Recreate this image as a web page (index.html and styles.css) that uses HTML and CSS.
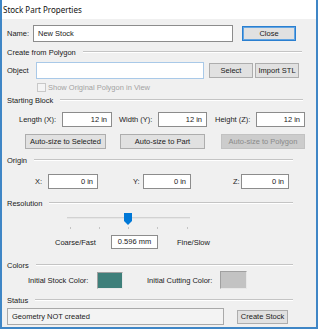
FILE: index.html
```html
<!DOCTYPE html>
<html>
<head>
<meta charset="utf-8">
<link rel="stylesheet" href="styles.css">
</head>
<body>
<div class="window">
  <div class="titlebar">Stock Part Properties</div>

  <div class="row r-name">
    <span class="lbl w-name">Name:</span>
    <div class="tb tb-name">New Stock</div>
    <div class="btn btn-default btn-close">Close</div>
  </div>

  <div class="group g1"><span>Create from Polygon</span><i class="rule"></i></div>

  <div class="row r-obj">
    <span class="lbl w-obj">Object</span>
    <div class="tb tb-obj"></div>
    <div class="btn btn-select">Select</div>
    <div class="btn btn-import">Import STL</div>
  </div>

  <div class="row r-chk">
    <span class="chk"></span>
    <span class="dis-text">Show Original Polygon in View</span>
  </div>

  <div class="group g2"><span>Starting Block</span><i class="rule"></i></div>

  <div class="row r-dim">
    <span class="lbl w-len">Length (X):</span>
    <div class="tb num w50">12 in</div>
    <span class="lbl w-wid">Width (Y):</span>
    <div class="tb num w49">12 in</div>
    <span class="lbl w-hgt">Height (Z):</span>
    <div class="tb num w49">12 in</div>
  </div>

  <div class="row r-auto">
    <div class="btn b-sel">Auto-size to Selected</div>
    <div class="btn b-part">Auto-size to Part</div>
    <div class="btn btn-disabled b-poly">Auto-size to Polygon</div>
  </div>

  <div class="group g3"><span>Origin</span><i class="rule"></i></div>

  <div class="row r-origin">
    <span class="lbl w-x">X:</span>
    <div class="tb num w50">0 in</div>
    <span class="lbl w-y">Y:</span>
    <div class="tb num w48">0 in</div>
    <span class="lbl w-z">Z:</span>
    <div class="tb num w48">0 in</div>
  </div>

  <div class="group g4"><span>Resolution</span><i class="rule"></i></div>

  <div class="slider">
    <div class="track"></div>
    <svg class="thumb" width="8" height="12" viewBox="0 0 8 12"><polygon points="0,0 8,0 8,8 4,12 0,8" fill="#0078d7"/></svg>
    <div class="ticks"><i></i><i></i><i></i><i></i><i></i></div>
  </div>

  <div class="row r-res">
    <span class="lbl w-coarse">Coarse/Fast</span>
    <div class="tb num tb-res">0.596 mm</div>
    <span class="lbl w-fine">Fine/Slow</span>
  </div>

  <div class="group g5"><span>Colors</span><i class="rule"></i></div>

  <div class="row r-colors">
    <span class="lbl w-stock">Initial Stock Color:</span>
    <div class="swatch sw-stock"></div>
    <span class="lbl w-cut">Initial Cutting Color:</span>
    <div class="swatch sw-cut"></div>
  </div>

  <div class="group g6"><span>Status</span><i class="rule"></i></div>

  <div class="row r-status">
    <div class="status-box">Geometry NOT created</div>
    <div class="btn btn-create">Create Stock</div>
  </div>
</div>
</body>
</html>
```

FILE: styles.css
```css
html, body {
  margin: 0;
  padding: 0;
  background: #ffffff;
}

body {
  width: 320px;
  height: 334px;
  overflow: hidden;
  font-family: "Liberation Sans", Arial, sans-serif;
  font-size: 7.5px;
  color: #1a1a1a;
}

.window {
  width: 314px;
  height: 327px;
  background: #f0f0f0;
  border-left: 2px solid #3f86c6;
  border-right: 2px solid #3f86c6;
  border-bottom: 2px solid #3f86c6;
  display: flex;
  flex-direction: column;
}

.titlebar {
  height: 19px;
  line-height: 20px;
  background: #ffffff;
  padding-left: 1px;
  font-family: "Noto Sans", "Open Sans", sans-serif;
  font-size: 8px;
  color: #111;
}

.row {
  display: flex;
  align-items: center;
  flex-shrink: 0;
}

.lbl {
  display: block;
  white-space: nowrap;
  flex-shrink: 0;
}

.tb {
  box-sizing: border-box;
  background: #ffffff;
  border: 1px solid #8c8c8c;
  height: 15px;
  line-height: 13px;
  padding: 0 4px;
  white-space: nowrap;
  flex-shrink: 0;
}

.num {
  text-align: right;
}

.btn {
  box-sizing: border-box;
  height: 15px;
  line-height: 13px;
  background: #e1e1e1;
  border: 1px solid #adadad;
  text-align: center;
  white-space: nowrap;
  flex-shrink: 0;
}

.btn-default {
  border: 1px solid #2a7fd0;
  box-shadow: inset 0 0 0 1px #63a5e2;
}

.btn-disabled {
  background: #cccccc;
  border-color: #c2c2c2;
  color: #8a8a8a;
}

/* group headers */
.group {
  display: flex;
  align-items: center;
  height: 12px;
  padding-left: 5px;
  flex-shrink: 0;
}

.group span {
  white-space: nowrap;
}

.group .rule {
  flex: 1;
  height: 0;
  border-top: 1px solid #c4c4c4;
  border-bottom: 1px solid #ffffff;
  margin-left: 7px;
}

.g1 { margin-top: 4px; margin-right: 14px; }
.g2 { margin-top: 2px; margin-right: 13px; }
.g3 { margin-top: 5px; margin-right: 23px; }
.g4 { margin-top: 8px; margin-right: 23px; }
.g5 { margin-top: 10px; margin-right: 23px; }
.g6 { margin-top: 5px; margin-right: 23px; }

/* name row */
.r-name {
  margin-top: 6px;
  height: 17px;
}
.w-name { margin-left: 5px; width: 26px; }
.tb-name {
  width: 200px;
  height: 17px;
  line-height: 15px;
  padding-left: 4px;
  text-align: left;
}
.btn-close { margin-left: 9px; width: 54px; }

/* object row */
.r-obj {
  margin-top: 4px;
  height: 17px;
}
.w-obj { margin-left: 5px; width: 29px; }
.tb-obj {
  width: 168px;
  height: 17px;
  border-color: #a9c9e8;
}
.btn-select { margin-left: 5px; width: 44px; }
.btn-import { margin-left: 2px; width: 44px; }

/* checkbox row */
.r-chk {
  margin-top: 3px;
  height: 10px;
}
.chk {
  display: block;
  box-sizing: border-box;
  width: 9px;
  height: 9px;
  margin-left: 35px;
  border: 1px solid #c8c8c8;
  background: #f4f4f4;
}
.dis-text {
  margin-left: 2px;
  color: #a3a3a3;
  white-space: nowrap;
}

/* dimension row */
.r-dim {
  margin-top: 6px;
  height: 15px;
}
.w-len { margin-left: 17px; width: 43px; }
.w-wid { margin-left: 7px; width: 39px; }
.w-hgt { margin-left: 8px; width: 41px; }
.w50 { width: 50px; }
.w49 { width: 49px; }
.w48 { width: 48px; }

/* auto-size row */
.r-auto {
  margin-top: 7px;
  height: 15px;
}
.b-sel { margin-left: 23px; width: 81px; }
.b-part { margin-left: 14px; width: 85px; }
.b-poly { margin-left: 16px; width: 84px; }

/* origin row */
.r-origin {
  margin-top: 8px;
  height: 15px;
}
.w-x { margin-left: 33px; width: 13px; }
.w-y { margin-left: 35px; width: 10px; }
.w-z { margin-left: 42px; width: 8px; }

/* slider */
.slider {
  position: relative;
  margin-top: 2px;
  margin-left: 65px;
  width: 123px;
  height: 20px;
  flex-shrink: 0;
}
.track {
  margin-top: 6px;
  height: 1px;
  background: #d2d2d2;
  border-bottom: 1px solid #e6e6e6;
}
.thumb {
  position: absolute;
  left: 57px;
  top: 2px;
  display: block;
}
.ticks {
  position: absolute;
  top: 16px;
  left: 0;
  width: 100%;
  height: 2px;
}
.ticks i {
  position: absolute;
  top: 0;
  width: 1px;
  height: 2px;
  background: #c4c4c4;
}
.ticks i:nth-child(1) { left: 3px; }
.ticks i:nth-child(2) { left: 32px; }
.ticks i:nth-child(3) { left: 61px; }
.ticks i:nth-child(4) { left: 90px; }
.ticks i:nth-child(5) { left: 120px; }

/* resolution row */
.r-res {
  margin-top: 4px;
  height: 14px;
}
.w-coarse { margin-left: 53px; width: 56px; }
.tb-res {
  width: 47px;
  height: 14px;
  line-height: 12px;
  text-align: center;
}
.w-fine { margin-left: 19px; }

/* colors row */
.r-colors {
  margin-top: 0;
  height: 18px;
}
.w-stock { margin-left: 26px; width: 69px; }
.w-cut { margin-left: 24px; width: 73px; }
.swatch {
  box-sizing: border-box;
  flex-shrink: 0;
  border: 1px solid #a0a0a0;
  border-right-color: #e8e8e8;
  border-bottom-color: #e8e8e8;
}
.sw-stock {
  width: 26px;
  height: 17px;
  background: #3e7f7a;
}
.sw-cut {
  width: 27px;
  height: 18px;
  background: #c3c3c3;
}

/* status row */
.r-status {
  margin-top: 2px;
  height: 17px;
}
.status-box {
  box-sizing: border-box;
  margin-left: 5px;
  width: 217px;
  height: 17px;
  line-height: 15px;
  padding-left: 4px;
  border: 1px solid #a9a9a9;
  background: #f3f3f3;
  white-space: nowrap;
}
.btn-create {
  margin-left: 13px;
  width: 51px;
  height: 14px;
  line-height: 12px;
}
```
